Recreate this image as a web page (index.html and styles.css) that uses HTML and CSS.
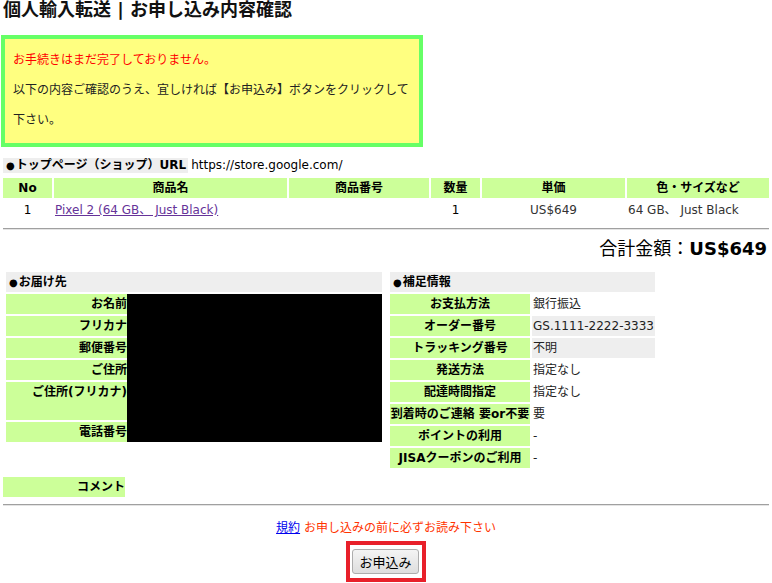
FILE: index.html
```html
<!DOCTYPE html>
<html lang="ja">
<head>
<meta charset="utf-8">
<title>個人輸入転送 | お申し込み内容確認</title>
<link rel="stylesheet" href="styles.css">
</head>
<body>
<div class="page">
  <h1 class="title">個人輸入転送 | お申し込み内容確認</h1>

  <div class="notice">
    <p class="notice-alert">お手続きはまだ完了しておりません。</p>
    <p>以下の内容ご確認のうえ、宜しければ【お申込み】ボタンをクリックして下さい。</p>
  </div>

  <div class="shop">
    <span class="shop-label"><span class="dot">●</span>トップページ（ショップ）URL</span>
    <span class="shop-url">https://store.google.com/</span>
  </div>

  <div class="items">
    <div class="th">No</div>
    <div class="th">商品名</div>
    <div class="th">商品番号</div>
    <div class="th">数量</div>
    <div class="th">単価</div>
    <div class="th">色・サイズなど</div>
    <div class="td center">1</div>
    <div class="td"><a class="item-link" href="#">Pixel 2 (64 GB、 Just Black)</a></div>
    <div class="td"></div>
    <div class="td center">1</div>
    <div class="td center muted">US$649</div>
    <div class="td muted">64 GB、 Just Black</div>
  </div>

  <hr class="rule rule-top">

  <div class="total">合計金額：<strong>US$649</strong></div>

  <div class="sections">
    <div class="ship">
      <div class="sec-head"><span class="dot">●</span>お届け先</div>
      <div class="ship-label">お名前</div>
      <div class="ship-label">フリカナ</div>
      <div class="ship-label">郵便番号</div>
      <div class="ship-label">ご住所</div>
      <div class="ship-label">ご住所(フリカナ)</div>
      <div class="ship-label">電話番号</div>
      <div class="redact"></div>
    </div>

    <div class="extra">
      <div class="sec-head"><span class="dot">●</span>補足情報</div>
      <div class="extra-label">お支払方法</div>
      <div class="extra-value">銀行振込</div>
      <div class="extra-label">オーダー番号</div>
      <div class="extra-value grey">GS.1111-2222-3333</div>
      <div class="extra-label">トラッキング番号</div>
      <div class="extra-value grey">不明</div>
      <div class="extra-label">発送方法</div>
      <div class="extra-value">指定なし</div>
      <div class="extra-label">配達時間指定</div>
      <div class="extra-value">指定なし</div>
      <div class="extra-label">到着時のご連絡 要or不要</div>
      <div class="extra-value">要</div>
      <div class="extra-label">ポイントの利用</div>
      <div class="extra-value">-</div>
      <div class="extra-label">JISAクーポンのご利用</div>
      <div class="extra-value">-</div>
    </div>
  </div>

  <div class="comment">コメント</div>

  <hr class="rule rule-bottom">

  <p class="terms"><a class="terms-link" href="#">規約</a> <span class="terms-note">お申し込みの前に必ずお読み下さい</span></p>

  <div class="submit">
    <span class="submit-box"><button class="submit-btn" type="button">お申込み</button></span>
  </div>
</div>
</body>
</html>
```

FILE: styles.css
```css
html, body {
  margin: 0;
  padding: 0;
  background: #fff;
}

body {
  font-family: "DejaVu Sans", "Noto Sans CJK JP", sans-serif;
  font-size: 12px;
  color: #000;
  overflow: hidden;
}

.page {
  padding: 0 3px;
}

.title {
  margin: 0;
  font-size: 18px;
  line-height: 20px;
  font-weight: bold;
  color: #111;
}

.notice {
  margin: 15px 0 0 -2px;
  width: 398px;
  padding: 6px 8px 8px;
  border: 4px solid #66ff66;
  background: #ffff80;
}

.notice p {
  margin: 0;
  line-height: 30px;
  color: #222;
}

.notice .notice-alert {
  color: #ff0000;
}

.dot {
  font-size: 10px;
  margin-right: 1px;
}

.shop {
  margin-top: 11px;
  display: flex;
  align-items: center;
  gap: 3px;
  height: 15px;
}

.shop-label {
  background: #eeeeee;
  font-weight: bold;
  line-height: 15px;
  padding: 0 2px 0 3px;
}

.shop-url {
  line-height: 15px;
}

.items {
  margin-top: 5px;
  display: grid;
  grid-template-columns: 49px 233px 140px 49px 143px 142px;
  grid-auto-rows: 20px;
  gap: 2px;
}

.th {
  background: #ccff99;
  font-weight: bold;
  text-align: center;
  line-height: 20px;
}

.td {
  line-height: 20px;
  padding: 0 1px;
  white-space: nowrap;
}

.td.center {
  text-align: center;
}

.td.muted {
  color: #333;
}

.item-link {
  color: #663399;
  text-decoration: underline;
}

.rule {
  margin: 0;
  height: 0;
  border: 0;
  border-top: 1px solid #a0a0a0;
  border-bottom: 1px solid #e4e4e4;
}

.rule-top {
  margin-top: 8px;
}

.total {
  margin-top: 8px;
  text-align: right;
  font-size: 18px;
  line-height: 22px;
  padding-right: 2px;
}

.total strong {
  font-weight: bold;
}

.sections {
  margin-top: 12px;
  display: flex;
  align-items: flex-start;
  gap: 8px;
  padding-left: 3px;
}

.sec-head {
  grid-column: 1 / -1;
  background: #eeeeee;
  font-weight: bold;
  line-height: 20px;
  padding-left: 3px;
}

.ship {
  display: grid;
  grid-template-columns: 121px 255px;
  grid-template-rows: 20px 20px 20px 20px 20px 38px 20px;
  row-gap: 2px;
}

.ship-label {
  grid-column: 1;
  background: #ccff99;
  font-weight: bold;
  text-align: right;
  line-height: 20px;
}

.redact {
  grid-column: 2;
  grid-row: 2 / -1;
  background: #000;
}

.extra {
  display: grid;
  grid-template-columns: 140px 123px;
  grid-auto-rows: 20px;
  gap: 2px;
}

.extra-label {
  background: #ccff99;
  font-weight: bold;
  text-align: center;
  line-height: 20px;
  white-space: nowrap;
}

.extra-value {
  line-height: 20px;
  padding-left: 1px;
  color: #222;
}

.extra-value.grey {
  background: #eeeeee;
}

.comment {
  margin-top: 9px;
  width: 122px;
  background: #ccff99;
  font-weight: bold;
  text-align: right;
  line-height: 20px;
}

.rule-bottom {
  margin-top: 7px;
}

.terms {
  margin: 14px 0 0;
  text-align: center;
  line-height: 16px;
}

.terms-link {
  color: #0000ee;
  text-decoration: underline;
}

.terms-note {
  color: #ff3300;
}

.submit {
  margin-top: 5px;
  text-align: center;
}

.submit-box {
  display: inline-flex;
  border: 4px solid #e8202a;
  padding: 4px 3px 4px 2px;
  background: #fff;
}

.submit-btn {
  width: 67px;
  height: 25px;
  padding: 0;
  font-family: "DejaVu Sans", "Noto Sans CJK JP", sans-serif;
  font-size: 13px;
  color: #000;
  background: linear-gradient(#f4f4f4, #dedede);
  border: 1px solid #adadad;
  border-radius: 3px;
}
```
